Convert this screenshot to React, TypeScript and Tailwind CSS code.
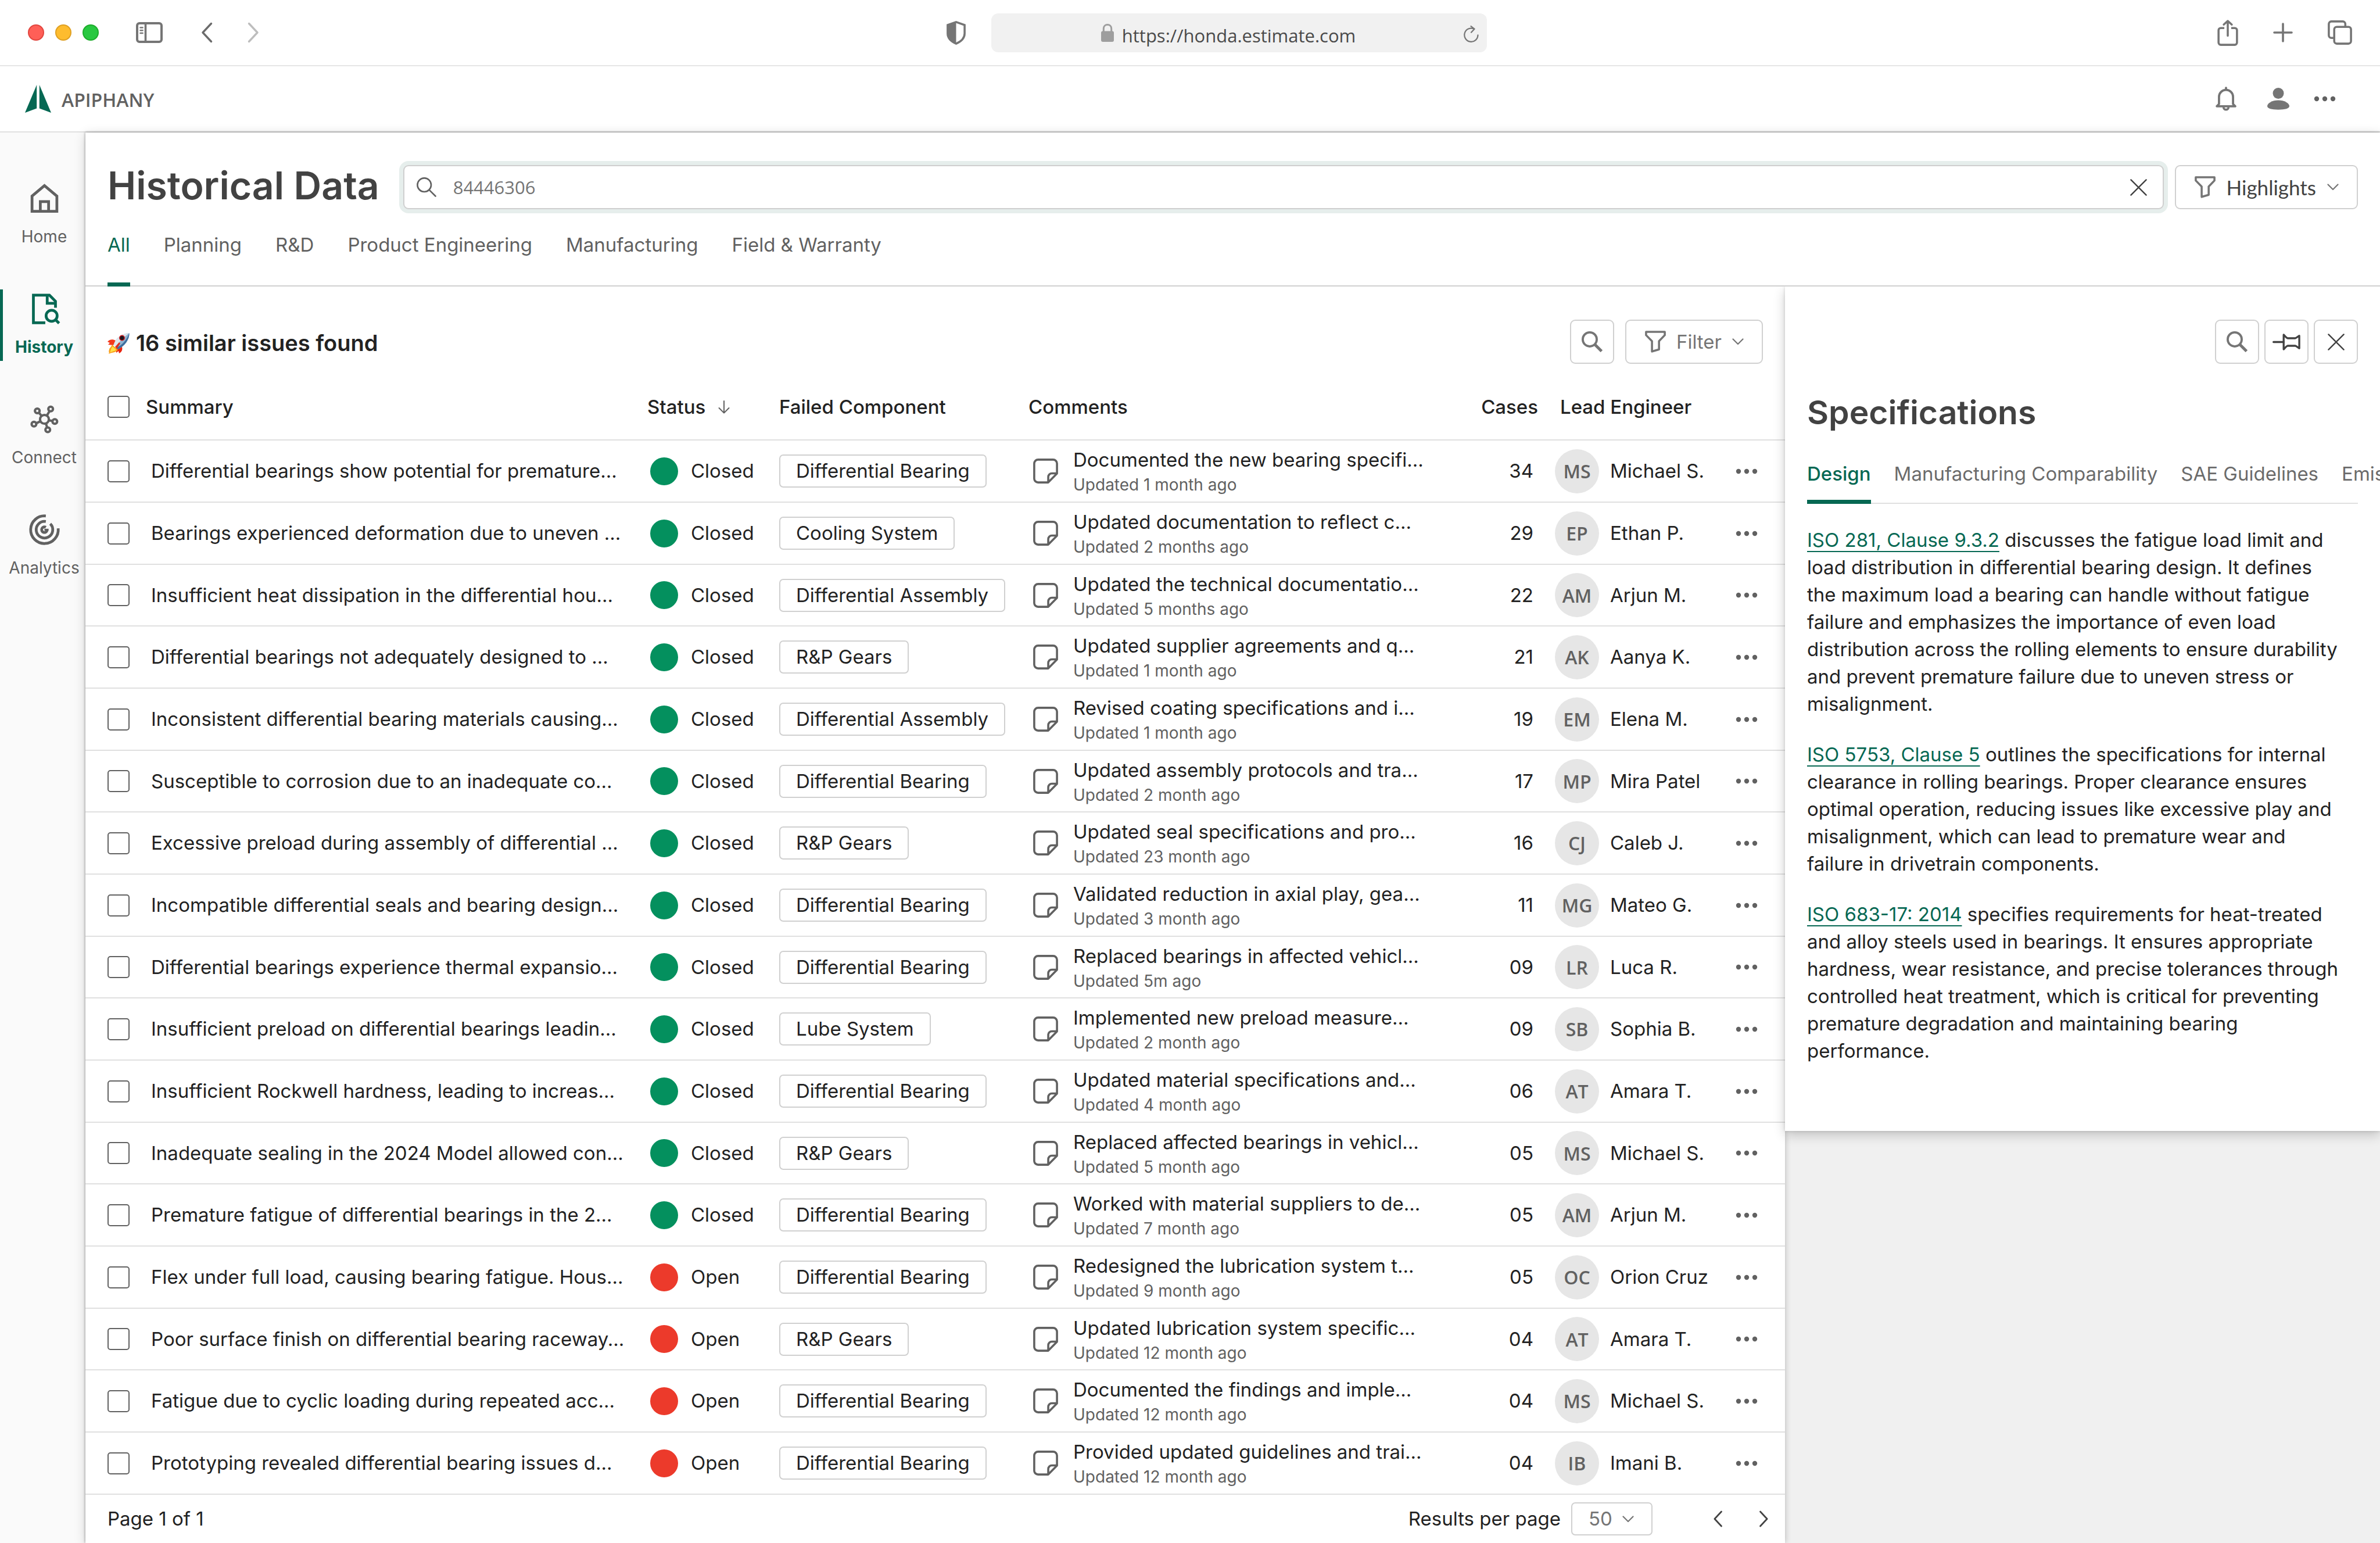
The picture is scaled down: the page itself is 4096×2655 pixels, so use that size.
import React from "react";

type IconProps = { className?: string };

/* ---------- Browser chrome icons ---------- */

const SidebarIcon = () => (
  <svg className="h-[36px] w-[46px]" viewBox="0 0 46 36" fill="none" stroke="#757575" strokeLinecap="round">
    <rect x="2" y="2" width="42" height="32" rx="4" strokeWidth="4" />
    <path d="M16.5 2V34" strokeWidth="3.6" />
    <path d="M7.5 9.5H11.5M7.5 14.2H11.5M7.5 19H11.5" strokeWidth="2.6" />
  </svg>
);

const Chevron = ({ dir, className }: { dir: "left" | "right"; className: string }) => (
  <svg className={className} viewBox="0 0 20 36" fill="none" stroke="currentColor" strokeLinecap="round" strokeLinejoin="round">
    <path d={dir === "left" ? "M17.5 2.5L3 18L17.5 33.5" : "M2.5 2.5L17 18L2.5 33.5"} strokeWidth="3.4" />
  </svg>
);

const ShieldIcon = () => (
  <svg className="h-[41px] w-[33px]" viewBox="0 0 14 17.4">
    <path d="M7 .8L13.2 3V9.2C13.2 12.4 10.6 15 7 16.6C3.4 15 .8 12.4 .8 9.2V3Z" fill="none" stroke="#757575" strokeWidth="1.5" />
    <path d="M7 .8V16.6C3.4 15 .8 12.4 .8 9.2V3Z" fill="#757575" />
  </svg>
);

const LockIcon = () => (
  <svg className="h-[31px] w-[22px]" viewBox="0 0 22 31">
    <rect x="0" y="12.5" width="22" height="18.5" rx="3" fill="#9e9e9e" />
    <path d="M4.3 14V8.2C4.3 4.2 7.2 1.5 11 1.5S17.7 4.2 17.7 8.2V14" fill="none" stroke="#9e9e9e" strokeWidth="3" />
  </svg>
);

const ReloadIcon = () => (
  <svg className="h-[29px] w-[26px]" viewBox="0 0 26 29" fill="none" stroke="#757575" strokeWidth="2.2" strokeLinecap="round" strokeLinejoin="round">
    <path d="M24.5 16.3A11.6 11.6 0 1 1 18 5.8" />
    <path d="M12.5 1.2L18.6 5.8L13 11.8" />
  </svg>
);

const ShareIcon = () => (
  <svg className="h-[45px] w-[36px]" viewBox="0 0 15 19" fill="none" stroke="#757575" strokeWidth="1.5" strokeLinejoin="round">
    <path d="M5 6H2.4A1.6 1.6 0 0 0 .8 7.600V16.600A1.6 1.6 0 0 0 2.4 18.200H12.6A1.6 1.6 0 0 0 14.2 16.600V7.600A1.6 1.6 0 0 0 12.6 6H10" />
    <path d="M7.5 1.200V11.600M4.600 3.500L7.500 .9L10.400 3.500" strokeLinecap="round" />
  </svg>
);

const PlusIcon = () => (
  <svg className="h-[34px] w-[34px]" viewBox="0 0 34 34" stroke="#757575" strokeWidth="3.600" strokeLinecap="round">
    <path d="M17 2V32M2 17H32" />
  </svg>
);

const TabsIcon = () => (
  <svg className="h-[42px] w-[42px]" viewBox="0 0 17.600 17.600" fill="none" stroke="#757575" strokeWidth="1.500">
    <rect x="4.700" y="4.700" width="12.100" height="12.100" rx="1.800" />
    <path d="M4.700 12.700H2.600A1.800 1.800 0 0 1 .8 10.900V2.600A1.800 1.800 0 0 1 2.600 .8H10.900A1.800 1.800 0 0 1 12.700 2.600V4.400" />
  </svg>
);

/* ---------- App icons ---------- */

const Logo = () => (
  <svg className="h-[48px] w-[45px]" viewBox="0 0 45 48" fill="#066853">
    <path d="M20.200 0V40.500L0 48Z" />
    <path d="M24.800 0V40.500L45 48Z" />
  </svg>
);

const BellIcon = () => (
  <svg className="h-[42px] w-[36px]" viewBox="0 0 15.200 17.600" fill="none" stroke="#757575" strokeWidth="1.600" strokeLinejoin="round">
    <path d="M2.500 12.600V7.400A5.100 5.100 0 0 1 12.700 7.400V12.600L14.300 14.200H.9Z" />
    <path d="M7.600 .8V2.200" strokeLinecap="round" />
    <path d="M5.800 14.800A1.800 1.900 0 0 0 9.400 14.800" />
  </svg>
);

const PersonIcon = () => (
  <svg className="h-[38px] w-[38px]" viewBox="0 0 16 16" fill="#757575">
    <circle cx="8" cy="4" r="4" />
    <path d="M0 13.400C0 11.200 3.600 9.100 8 9.100S16 11.200 16 13.400C16 15 13 15.900 8 15.900S0 15 0 13.400Z" />
  </svg>
);

const DotsIcon = () => (
  <svg className="h-[10px] w-[38px]" viewBox="0 0 38 10" fill="#616161">
    <circle cx="5" cy="5" r="4.200" />
    <circle cx="19" cy="5" r="4.200" />
    <circle cx="33" cy="5" r="4.200" />
  </svg>
);

const HomeIcon = () => (
  <svg className="h-[57px] w-[57px]" viewBox="0 0 24 24" fill="none" stroke="currentColor" strokeWidth="2">
    <path d="M3 21.300V10.300L12 2.700L21 10.300V21.300Z" />
    <path d="M9 21.300V14.300H15V21.300" />
  </svg>
);

const HistoryIcon = () => (
  <svg className="h-[57px] w-[57px]" viewBox="0 0 24 24" fill="none" stroke="currentColor" strokeWidth="2">
    <path d="M12.600 22H4V2H15.600L20 6.500V11.200" />
    <path d="M14 2V7.900H20" />
    <circle cx="17.200" cy="17" r="4" />
    <path d="M20 19.800L22.600 22.400" />
  </svg>
);

const ConnectIcon = () => (
  <svg className="h-[57px] w-[57px]" viewBox="0 0 24 24" fill="none" stroke="currentColor" strokeWidth="1.700">
    <circle cx="12" cy="12" r="3.200" />
    <circle cx="6.800" cy="5.900" r="1.700" />
    <circle cx="16.500" cy="4.500" r="1.700" />
    <circle cx="19.500" cy="13.600" r="1.700" />
    <circle cx="4.400" cy="15.500" r="1.700" />
    <circle cx="14.400" cy="19.600" r="1.700" />
    <path d="M8 7.200L9.900 9.500M15.700 6.100L13.700 9.300M17.900 13.200L15.100 12.700M6 14.900L9.100 13.400M13.900 17.900L13.100 15" />
  </svg>
);

const AnalyticsIcon = () => (
  <svg className="h-[57px] w-[57px]" viewBox="0 0 24 24" fill="none" stroke="currentColor" strokeWidth="2">
    <path d="M13 2.050A10 10 0 1 0 21.950 11" />
    <path d="M13 6.080A6 6 0 1 0 16.200 7.700" />
    <path d="M13 10.270A2 2 0 1 0 13.900 12.400" />
    <path d="M12 12H15" strokeWidth="1.400" />
  </svg>
);

const ThinSearchIcon = () => (
  <svg className="h-[34px] w-[34px] shrink-0" viewBox="0 0 34 34" fill="none" stroke="#616161" strokeWidth="2.600" strokeLinecap="round">
    <circle cx="13.200" cy="13.200" r="11.800" />
    <path d="M21.800 21.800L32.500 32.500" />
  </svg>
);

const SearchIcon = () => (
  <svg className="h-[36px] w-[36px]" viewBox="0 0 15.200 15.200" fill="none" stroke="#757575">
    <circle cx="5.900" cy="5.900" r="5.100" strokeWidth="1.600" />
    <path d="M9.500 9.500L14.500 14.500" strokeWidth="2.100" />
  </svg>
);

const CloseIcon = () => (
  <svg className="h-[29px] w-[29px]" viewBox="0 0 29 29" stroke="#424242" strokeWidth="2.400" strokeLinecap="round">
    <path d="M1.400 1.400L27.600 27.600M27.600 1.400L1.400 27.600" />
  </svg>
);

const FunnelIcon = () => (
  <svg className="h-[38px] w-[36px]" viewBox="0 0 15.200 16" fill="none" stroke="#757575" strokeWidth="1.500" strokeLinejoin="round">
    <path d="M.8 .8H14.400V3.200L10.200 7.600V13.600L5.100 15.100V7.600L.8 3.200Z" />
  </svg>
);

const CaretDown = () => (
  <svg className="h-[12px] w-[20px]" viewBox="0 0 20 12" fill="none" stroke="#757575" strokeWidth="2.200" strokeLinecap="round" strokeLinejoin="round">
    <path d="M1.500 1.500L10 10L18.500 1.500" />
  </svg>
);

const ArrowDown = () => (
  <svg className="h-[23px] w-[20px]" viewBox="0 0 20 23" fill="none" stroke="#616161" strokeWidth="2" strokeLinecap="round" strokeLinejoin="round">
    <path d="M10 1V21.500M1.500 13L10 21.500L18.500 13" />
  </svg>
);

const NoteIcon = () => (
  <svg className="h-[43px] w-[43px] shrink-0" viewBox="0 0 18 18" fill="none" stroke="#616161" strokeWidth="1.500" strokeLinejoin="round">
    <path d="M3.600 .8H14.400A2.800 2.800 0 0 1 17.200 3.600V10.800L10.900 17.200H3.600A2.800 2.800 0 0 1 .8 14.400V3.600A2.800 2.800 0 0 1 3.600 .8Z" />
    <path d="M17.200 10.700H13.500A2.600 2.600 0 0 0 10.900 13.300V17.200" />
  </svg>
);

const PinIcon = () => (
  <svg className="h-[29px] w-[48px]" viewBox="0 0 20 12" fill="none" stroke="#424242" strokeWidth="1.400" strokeLinejoin="round">
    <path d="M.7 6H8" strokeLinecap="round" />
    <path d="M8 .8V11.200C8.800 10.700 9.200 9.300 10.800 8.700H16.200C17.400 9 18.200 10 19.200 10.500V1.500C18.200 2 17.400 3 16.200 3.300H10.800C9.200 2.700 8.800 1.300 8 .8Z" />
  </svg>
);

const Rocket = ({ className }: IconProps) => (
  <svg className={className} viewBox="0 0 38 36">
    <path d="M0 15C3 11 9 10 14 13L10 21L1 20L4 17Z" fill="#f4391c" />
    <path d="M24 22C27 27 25 33 20 35L19 31L15 34L15 26Z" fill="#e8230f" />
    <path d="M8 20L18 29C15 34 8 33 2 36C4 33 1 32 3 29C2 27 6 25 8 20Z" fill="#f9a01b" />
    <path d="M9 23L15 29C11 32 8 31 4 34C6 31 5 27 9 23Z" fill="#ffe14a" />
    <path d="M11 20C13 10 23 1 37.500 0C38 11 30 22 18 28Z" fill="#8fb4d2" />
    <path d="M11 20C13 10 23 1 37.500 0C30 6 20 14 14.500 24Z" fill="#dfe7ee" />
    <path d="M18 28C30 22 38 11 37.500 0C33 12 26 20 15.500 25.500Z" fill="#3f6f9f" />
    <circle cx="25" cy="8.500" r="5" fill="#cf1f1f" />
    <circle cx="25" cy="8.500" r="3.500" fill="#1d1620" />
    <path d="M13 24L20 16L22 18L16 27Z" fill="#e02c1b" />
  </svg>
);

/* ---------- Data ---------- */

type Row = {
  summary: string;
  open?: boolean;
  component: string;
  comment: string;
  updated: string;
  cases: string;
  initials: string;
  engineer: string;
};

const rows: Row[] = [
  { summary: "Differential bearings show potential for premature...", component: "Differential Bearing", comment: "Documented the new bearing specifi...", updated: "Updated 1 month ago", cases: "34", initials: "MS", engineer: "Michael S." },
  { summary: "Bearings experienced deformation due to uneven ...", component: "Cooling System", comment: "Updated documentation to reflect c...", updated: "Updated 2 months ago", cases: "29", initials: "EP", engineer: "Ethan P." },
  { summary: "Insufficient heat dissipation in the differential hou...", component: "Differential Assembly", comment: "Updated the technical documentatio...", updated: "Updated 5 months ago", cases: "22", initials: "AM", engineer: "Arjun M." },
  { summary: "Differential bearings not adequately designed to ...", component: "R&P Gears", comment: "Updated supplier agreements and q...", updated: "Updated 1 month ago", cases: "21", initials: "AK", engineer: "Aanya K." },
  { summary: "Inconsistent differential bearing materials causing...", component: "Differential Assembly", comment: "Revised coating specifications and i...", updated: "Updated 1 month ago", cases: "19", initials: "EM", engineer: "Elena M." },
  { summary: "Susceptible to corrosion due to an inadequate co...", component: "Differential Bearing", comment: "Updated assembly protocols and tra...", updated: "Updated 2 month ago", cases: "17", initials: "MP", engineer: "Mira Patel" },
  { summary: "Excessive preload during assembly of differential ...", component: "R&P Gears", comment: "Updated seal specifications and pro...", updated: "Updated 23 month ago", cases: "16", initials: "CJ", engineer: "Caleb J." },
  { summary: "Incompatible differential seals and bearing design...", component: "Differential Bearing", comment: "Validated reduction in axial play, gea...", updated: "Updated 3 month ago", cases: "11", initials: "MG", engineer: "Mateo G." },
  { summary: "Differential bearings experience thermal expansio...", component: "Differential Bearing", comment: "Replaced bearings in affected vehicl...", updated: "Updated 5m ago", cases: "09", initials: "LR", engineer: "Luca R." },
  { summary: "Insufficient preload on differential bearings leadin...", component: "Lube System", comment: "Implemented new preload measure...", updated: "Updated 2 month ago", cases: "09", initials: "SB", engineer: "Sophia B." },
  { summary: "Insufficient Rockwell hardness, leading to increas...", component: "Differential Bearing", comment: "Updated material specifications and...", updated: "Updated 4 month ago", cases: "06", initials: "AT", engineer: "Amara T." },
  { summary: "Inadequate sealing in the 2024 Model allowed con...", component: "R&P Gears", comment: "Replaced affected bearings in vehicl...", updated: "Updated 5 month ago", cases: "05", initials: "MS", engineer: "Michael S." },
  { summary: "Premature fatigue of differential bearings in the 2...", component: "Differential Bearing", comment: "Worked with material suppliers to de...", updated: "Updated 7 month ago", cases: "05", initials: "AM", engineer: "Arjun M." },
  { summary: "Flex under full load, causing bearing fatigue. Hous...", open: true, component: "Differential Bearing", comment: "Redesigned the lubrication system t...", updated: "Updated 9 month ago", cases: "05", initials: "OC", engineer: "Orion Cruz" },
  { summary: "Poor surface finish on differential bearing raceway...", open: true, component: "R&P Gears", comment: "Updated lubrication system specific...", updated: "Updated 12 month ago", cases: "04", initials: "AT", engineer: "Amara T." },
  { summary: "Fatigue due to cyclic loading during repeated acc...", open: true, component: "Differential Bearing", comment: "Documented the findings and imple...", updated: "Updated 12 month ago", cases: "04", initials: "MS", engineer: "Michael S." },
  { summary: "Prototyping revealed differential bearing issues d...", open: true, component: "Differential Bearing", comment: "Provided updated guidelines and trai...", updated: "Updated 12 month ago", cases: "04", initials: "IB", engineer: "Imani B." },
];

const navItems = [
  { label: "Home", Icon: HomeIcon },
  { label: "History", Icon: HistoryIcon, active: true },
  { label: "Connect", Icon: ConnectIcon },
  { label: "Analytics", Icon: AnalyticsIcon },
];

const tabs = ["All", "Planning", "R&D", "Product Engineering", "Manufacturing", "Field & Warranty"];
const specTabs = ["Design", "Manufacturing Comparability", "SAE Guidelines", "Emissions"];

/* ---------- Sections ---------- */

const Checkbox = ({ label }: { label: string }) => (
  <input
    type="checkbox"
    aria-label={label}
    className="block h-[38px] w-[38px] appearance-none rounded-[5px] border-2 border-[#616161] bg-white checked:bg-[#066853]"
  />
);

function BrowserBar() {
  return (
    <div className="flex h-[114px] shrink-0 items-center border-b-2 border-[#e6e6e6] bg-white">
      <div className="flex flex-[13] items-center pl-[48px] pr-[44px]">
        <div className="flex gap-[19px]">
          <span className="h-[28px] w-[28px] rounded-full border-2 border-[#e2463f] bg-[#ff5f57]" />
          <span className="h-[28px] w-[28px] rounded-full border-2 border-[#dfa023] bg-[#febc2e]" />
          <span className="h-[28px] w-[28px] rounded-full border-2 border-[#1dad2b] bg-[#28c840]" />
        </div>
        <button aria-label="Toggle sidebar" className="ml-[64px]"><SidebarIcon /></button>
        <button aria-label="Back" className="ml-[66px] text-[#6b6b6b]"><Chevron dir="left" className="h-[36px] w-[20px]" /></button>
        <button aria-label="Forward" className="ml-[60px] text-[#bdbdbd]"><Chevron dir="right" className="h-[36px] w-[20px]" /></button>
        <button aria-label="Privacy report" className="ml-auto"><ShieldIcon /></button>
      </div>
      <div className="relative flex h-[67px] w-[853px] items-center justify-center gap-[14px] rounded-[12px] bg-[#f1f1f1]">
        <LockIcon />
        <span className="pr-[36px] pt-[10px] font-['Open_Sans',sans-serif] text-[31px] leading-[44px] text-[#4a4a4a]">https://honda.estimate.com</span>
        <button aria-label="Reload" className="absolute right-[14px] top-[21px]"><ReloadIcon /></button>
      </div>
      <div className="flex flex-[12] items-center justify-end gap-[60px] pr-[48px]">
        <button aria-label="Share"><ShareIcon /></button>
        <button aria-label="New tab"><PlusIcon /></button>
        <button aria-label="Show tabs"><TabsIcon /></button>
      </div>
    </div>
  );
}

function AppHeader() {
  return (
    <header className="flex h-[114px] shrink-0 items-center border-b-2 border-[#e0e0e0] bg-white pl-[43px] pr-[76px]">
      <Logo />
      <span className="ml-[18px] pt-[4px] font-['Open_Sans',sans-serif] text-[32px] font-semibold leading-[44px] text-[#616161]">APIPHANY</span>
      <div className="ml-auto flex items-center">
        <button aria-label="Notifications"><BellIcon /></button>
        <button aria-label="Account" className="ml-[53px]"><PersonIcon /></button>
        <button aria-label="More" className="ml-[42px]"><DotsIcon /></button>
      </div>
    </header>
  );
}

function SideNav() {
  return (
    <nav aria-label="Main" className="flex w-[147px] shrink-0 flex-col gap-[67px] bg-[#fafafa] pt-[80px]">
      {navItems.map(({ label, Icon, active }) => (
        <a
          key={label}
          href="#"
          aria-current={active ? "page" : undefined}
          className={
            active
              ? "flex h-[123px] w-[152px] flex-col items-center border-l-[5px] border-[#066853] pr-[5px] pt-[5px] font-bold text-[#066853]"
              : "flex h-[123px] w-[152px] flex-col items-center pt-[5px] text-[#616161]"
          }
        >
          <Icon />
          <span className="mt-[18px] text-[28px] leading-[38px]">{label}</span>
        </a>
      ))}
    </nav>
  );
}

function MainHeader() {
  return (
    <div className="border-b-2 border-[#d0d0d0] px-[38px] pt-[56px]">
      <div className="flex items-center gap-[19px]">
        <h1 className="mr-[22px] self-start text-[66px] font-semibold leading-[71px] text-[#424242]">Historical Data</h1>
        <div className="flex h-[76px] flex-1 items-center rounded-[9px] border-2 border-[#cfcfcf] bg-white pl-[21px] pr-[27px] shadow-[0_0_0_7px_#e6eeec]">
          <ThinSearchIcon />
          <input
            type="text"
            aria-label="Search historical data"
            defaultValue="84446306"
            className="ml-[29px] min-w-0 flex-1 bg-transparent font-['Open_Sans',sans-serif] text-[31px] leading-[44px] text-[#757575] outline-none"
          />
          <button aria-label="Clear search"><CloseIcon /></button>
        </div>
        <button className="flex h-[76px] items-center rounded-[9px] border-2 border-[#d0d0d0] bg-white pl-[32px] pr-[31px]">
          <FunnelIcon />
          <span className="ml-[19px] font-['Lato',sans-serif] text-[35px] leading-[47px] text-[#424242]">Highlights</span>
          <span className="ml-[19px]"><CaretDown /></span>
        </button>
      </div>
      <div role="tablist" className="-mb-[2px] mt-[38px] flex gap-[58px]">
        {tabs.map((tab, i) => (
          <button
            key={tab}
            role="tab"
            aria-selected={i === 0}
            className={
              i === 0
                ? "border-b-[7px] border-[#066853] pb-[41px] text-[33px] leading-[47px] text-[#066853]"
                : "border-b-[7px] border-transparent pb-[41px] text-[33px] leading-[47px] text-[#616161]"
            }
          >
            {tab}
          </button>
        ))}
      </div>
    </div>
  );
}

function IssueTable() {
  return (
    <table className="w-full table-fixed border-collapse text-[33px] leading-[47px] text-[#222222]">
      <colgroup>
        <col className="w-[104px]" />
        <col />
        <col className="w-[227px]" />
        <col className="w-[429px]" />
        <col className="w-[700px]" />
        <col className="w-[206px]" />
        <col className="w-[311px]" />
        <col className="w-[85px]" />
      </colgroup>
      <thead>
        <tr className="h-[113px] border-b-2 border-[#e0e0e0] text-left">
          <th className="pl-[38px]"><Checkbox label="Select all issues" /></th>
          <th className="font-medium">Summary</th>
          <th className="font-medium" aria-sort="descending">
            <button className="flex items-center gap-[22px] font-medium">Status <ArrowDown /></button>
          </th>
          <th className="font-medium">Failed Component</th>
          <th className="font-medium">Comments</th>
          <th className="pr-[29px] text-right font-medium">Cases</th>
          <th className="pl-[9px] font-medium">Lead Engineer</th>
          <th aria-label="Actions" />
        </tr>
      </thead>
      <tbody>
        {rows.map((row, i) => (
          <tr key={i} className="h-[107px] border-b-2 border-[#e0e0e0] nth-[3n]:h-[106px]">
            <td className="pl-[38px]"><Checkbox label={"Select issue " + (i + 1)} /></td>
            <td className="whitespace-nowrap pl-[9px]">{row.summary}</td>
            <td className="pl-[5px]">
              <div className="flex items-center gap-[22px]">
                <span className={row.open ? "h-[48px] w-[48px] rounded-full bg-[#ec3a2b]" : "h-[48px] w-[48px] rounded-full bg-[#04905e]"} />
                {row.open ? "Open" : "Closed"}
              </div>
            </td>
            <td>
              <span className="flex h-[57px] w-fit items-center whitespace-nowrap rounded-[7px] border-2 border-[#d0d0d0] px-[27px]">{row.component}</span>
            </td>
            <td className="pl-[8px]">
              <div className="flex items-center gap-[26px]">
                <NoteIcon />
                <div className="whitespace-nowrap">
                  <p>{row.comment}</p>
                  <p className="text-[28px] leading-[38px] text-[#616161]">{row.updated}</p>
                </div>
              </div>
            </td>
            <td className="pr-[37px] text-right">{row.cases}</td>
            <td>
              <div className="flex items-center gap-[19px] whitespace-nowrap">
                <span className="flex h-[76px] w-[76px] items-center justify-center rounded-full bg-[#e6e6e6] font-['Open_Sans',sans-serif] text-[32px] font-semibold text-[#616161]">{row.initials}</span>
                {row.engineer}
              </div>
            </td>
            <td><button aria-label={"More actions for issue " + (i + 1)} className="flex"><DotsIcon /></button></td>
          </tr>
        ))}
      </tbody>
    </table>
  );
}

function IssuesPanel() {
  return (
    <section className="flex min-w-0 flex-1 flex-col bg-white shadow-[0_0_10px_rgba(0,0,0,0.25)]">
      <div className="flex items-center gap-[19px] pb-[18px] pl-[38px] pr-[38px] pt-[57px]">
        <h2 className="flex items-center gap-[11px] pt-[5px] text-[38px] font-semibold leading-[57px] text-[#222222]">
          <Rocket className="h-[36px] w-[38px]" />
          16 similar issues found
        </h2>
        <button aria-label="Search issues" className="ml-auto flex h-[76px] w-[76px] items-center justify-center rounded-[9px] border-2 border-[#d0d0d0]"><SearchIcon /></button>
        <button className="flex h-[76px] items-center rounded-[9px] border-2 border-[#d0d0d0] pl-[32px] pr-[31px]">
          <FunnelIcon />
          <span className="ml-[18px] text-[33px] leading-[47px] text-[#757575]">Filter</span>
          <span className="ml-[18px]"><CaretDown /></span>
        </button>
      </div>
      <IssueTable />
      <footer className="flex flex-1 items-center pl-[38px] pr-[28px] text-[33px] leading-[47px] text-[#222222]">
        <span>Page 1 of 1</span>
        <label htmlFor="per-page" className="ml-auto">Results per page</label>
        <div className="relative ml-[18px] mr-[104px]">
          <select id="per-page" defaultValue="50" className="h-[57px] w-[140px] appearance-none rounded-[7px] border-2 border-[#d0d0d0] bg-white pl-[28px] text-[33px] text-[#757575]">
            <option>50</option>
            <option>100</option>
          </select>
          <span className="pointer-events-none absolute right-[32px] top-[23px]"><CaretDown /></span>
        </div>
        <button aria-label="Previous page" className="text-[#424242]"><Chevron dir="left" className="h-[29px] w-[17px]" /></button>
        <button aria-label="Next page" className="ml-[62px] text-[#424242]"><Chevron dir="right" className="h-[29px] w-[17px]" /></button>
      </footer>
    </section>
  );
}

const SpecLink = ({ children }: { children: React.ReactNode }) => (
  <a href="#" className="text-[#066853] underline decoration-2 underline-offset-[7px] [text-decoration-skip-ink:none]">{children}</a>
);

function SpecPanel() {
  const button = "flex h-[76px] w-[76px] items-center justify-center rounded-[9px] border-2 border-[#d0d0d0]";
  return (
    <aside className="relative w-[1024px] shrink-0 self-start overflow-hidden bg-white px-[38px] pb-[114px] pt-[57px] shadow-[0_0_5px_rgba(0,0,0,0.15),0_7px_19px_rgba(0,0,0,0.2)]">
      <div className="flex justify-end gap-[9px]">
        <button aria-label="Search specifications" className={button}><SearchIcon /></button>
        <button aria-label="Pin panel" className={button}><PinIcon /></button>
        <button aria-label="Close panel" className={button}><CloseIcon /></button>
      </div>
      <h2 className="mt-[48px] text-[57px] font-semibold leading-[71px] text-[#424242]">Specifications</h2>
      <div role="tablist" className="mt-[47px] flex gap-[40px] whitespace-nowrap border-b-2 border-[#e0e0e0]">
        {specTabs.map((tab, i) => (
          <button
            key={tab}
            role="tab"
            aria-selected={i === 0}
            className={
              i === 0
                ? "-mb-[2px] border-b-[7px] border-[#066853] pb-[21px] text-[33px] font-medium leading-[47px] text-[#066853]"
                : "-mb-[2px] border-b-[7px] border-transparent pb-[21px] text-[33px] leading-[47px] text-[#6b6b6b]"
            }
          >
            {tab}
          </button>
        ))}
      </div>
      <div className="mt-[39px] flex flex-col gap-[40px] pr-[24px] text-[33px] leading-[47px] text-[#222222]">
        <p>
          <SpecLink>ISO 281, Clause 9.3.2</SpecLink> discusses the fatigue load limit and load distribution in differential bearing
          design. It defines the maximum load a bearing can handle without fatigue failure and emphasizes the importance of even
          load distribution across the rolling elements to ensure durability and prevent premature failure due to uneven stress or
          misalignment.
        </p>
        <p>
          <SpecLink>ISO 5753, Clause 5</SpecLink> outlines the specifications for internal clearance in rolling bearings. Proper
          clearance ensures optimal operation, reducing issues like excessive play and misalignment, which can lead to premature
          wear and failure in drivetrain components.
        </p>
        <p>
          <SpecLink>ISO 683-17: 2014</SpecLink> specifies requirements for heat-treated and alloy steels used in bearings. It
          ensures appropriate hardness, wear resistance, and precise tolerances through controlled heat treatment, which is
          critical for preventing premature degradation and maintaining bearing performance.
        </p>
      </div>
    </aside>
  );
}

export default function App() {
  return (
    <div className="flex min-h-screen flex-col bg-white font-['Inter',sans-serif]">
      <BrowserBar />
      <AppHeader />
      <div className="flex flex-1">
        <SideNav />
        <main className="relative flex min-w-0 flex-1 flex-col bg-white shadow-[0_0_4px_rgba(0,0,0,0.45),0_4px_19px_rgba(0,0,0,0.16)]">
          <MainHeader />
          <div className="flex flex-1 overflow-hidden bg-[#f0f0f0]">
            <IssuesPanel />
            <SpecPanel />
          </div>
        </main>
      </div>
    </div>
  );
}
